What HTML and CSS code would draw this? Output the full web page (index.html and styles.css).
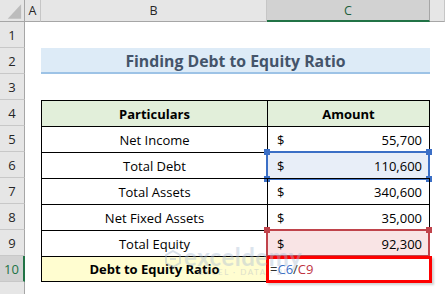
FILE: index.html
```html
<!DOCTYPE html>
<html>
<head>
<meta charset="utf-8">
<link rel="stylesheet" href="styles.css">
</head>
<body>
<div class="sheet">
  <div class="ch corner"><svg width="25" height="22" viewBox="0 0 25 22"><polygon points="22,4 22,19 8,19" fill="#bcbcbc"/></svg></div>
  <div class="ch">A</div>
  <div class="ch">B</div>
  <div class="ch ch-active">C</div>
  <div class="ch"></div>

  <div class="rh">1</div><div class="c"></div><div class="c"></div><div class="c"></div><div class="c"></div>

  <div class="rh">2</div><div class="c"></div><div class="title">Finding Debt to Equity Ratio</div><div class="c"></div>

  <div class="rh">3</div><div class="c"></div><div class="c"></div><div class="c"></div><div class="c"></div>

  <div class="rh">4</div><div class="c"></div>
  <div class="t tb head">Particulars</div><div class="t tc head">Amount</div><div class="c"></div>

  <div class="rh">5</div><div class="c"></div>
  <div class="t tb">Net Income</div><div class="t tc amt"><span>$</span><span>55,700</span></div><div class="c"></div>

  <div class="rh">6</div><div class="c"></div>
  <div class="t tb">Total Debt</div>
  <div class="t tc amt sel-b"><span>$</span><span>110,600</span>
    <div class="box-b"><i class="h tl"></i><i class="h tr"></i><i class="h bl"></i><i class="h br"></i></div>
  </div><div class="c"></div>

  <div class="rh">7</div><div class="c"></div>
  <div class="t tb">Total Assets</div><div class="t tc amt"><span>$</span><span>340,600</span></div><div class="c"></div>

  <div class="rh">8</div><div class="c"></div>
  <div class="t tb">Net Fixed Assets</div><div class="t tc amt"><span>$</span><span>35,000</span></div><div class="c"></div>

  <div class="rh">9</div><div class="c"></div>
  <div class="t tb">Total Equity</div>
  <div class="t tc amt sel-r"><span>$</span><span>92,300</span>
    <div class="box-r"><i class="h tl"></i><i class="h tr"></i></div>
  </div><div class="c"></div>

  <div class="rh rh-active">10</div><div class="c"></div>
  <div class="t tb last result">Debt to Equity Ratio</div>
  <div class="t tc last formula"><span class="eq">=</span><span class="ref-b">C6</span><span class="eq">/</span><span class="ref-r">C9</span>
    <div class="box-edit"></div>
  </div><div class="c"></div>

  <div class="rh"></div><div class="c"></div><div class="c"></div><div class="c"></div><div class="c"></div>

  <div class="wm">
    <svg class="wm-logo" width="16" height="18" viewBox="0 0 16 18"><path d="M8 1 L15 5 L15 13 L8 17 L1 13 L1 5 Z" fill="none" stroke="#9fb3cc" stroke-width="2"/><path d="M5 9 L11 9" stroke="#9fb3cc" stroke-width="2"/></svg>
    <div class="wm-text">
      <div class="wm-big">exceldemy</div>
      <div class="wm-small">EXCEL · DATA · BI</div>
    </div>
  </div>
</div>
</body>
</html>
```

FILE: styles.css
```css
html, body {
  margin: 0;
  padding: 0;
  background: #ffffff;
  overflow: hidden;
}

.sheet {
  position: relative;
  width: 445px;
  height: 294px;
  display: grid;
  grid-template-columns: 25px 16px 226px 163px 15px;
  grid-template-rows: 22px repeat(11, 26px);
  font-family: "Open Sans", "Liberation Sans", sans-serif;
  font-size: 13px;
  color: #000;
}

.ch {
  background: #e6e6e6;
  border-bottom: 1px solid #a6a6a6;
  border-right: 1px solid #c6c6c6;
  box-sizing: border-box;
  display: flex;
  align-items: center;
  justify-content: center;
  font-size: 12.5px;
  color: #262626;
}

.corner {
  border-right: 1px solid #a6a6a6;
}

.ch-active {
  background: #d2d2d2;
  border-bottom: 2px solid #217346;
  color: #1d5f3c;
  border-right: 1px solid #a6a6a6;
}

.rh {
  background: #e6e6e6;
  border-right: 1px solid #a6a6a6;
  border-bottom: 1px solid #c8c8c8;
  box-sizing: border-box;
  display: flex;
  align-items: center;
  justify-content: center;
  font-size: 13px;
  color: #262626;
}

.rh-active {
  background: #d2d2d2;
  border-right: 2px solid #217346;
  color: #217346;
}

.c {
  background: #fff;
}

.title {
  grid-column: 3 / 5;
  background: #ddebf7;
  border-bottom: 2px solid #9dc3e6;
  box-sizing: border-box;
  display: flex;
  align-items: center;
  justify-content: center;
  font-weight: 700;
  font-size: 15.8px;
  color: #44546a;
  padding-top: 1px;
}

.t {
  box-sizing: border-box;
  border-top: 1px solid #000;
  border-left: 1px solid #000;
  display: flex;
  align-items: center;
  position: relative;
}

.tb {
  justify-content: center;
}

.tc {
  border-right: 1px solid #000;
}

.last {
  border-bottom: 1px solid #000;
}

.head {
  background: #e2efda;
  font-weight: 700;
  justify-content: center;
}

.amt {
  justify-content: space-between;
  padding: 0 7px 0 9px;
}

.sel-b {
  background: #e8eef8;
}

.sel-r {
  background: #f9e4e5;
}

.result {
  background: #fffdd0;
  font-weight: 700;
}

.formula {
  padding-left: 2px;
}

.eq {
  color: #333;
}

.ref-b {
  color: #3b6fc6;
}

.ref-r {
  color: #c0343f;
}

.box-b {
  position: absolute;
  left: -2px;
  top: -2px;
  right: -1px;
  bottom: -2px;
  border: 2px solid #3b6fc6;
}

.box-r {
  position: absolute;
  left: -2px;
  top: -2px;
  right: -1px;
  bottom: -1px;
  border: 2px solid #c0434b;
}

.box-b .h { background: #3b6fc6; }
.box-r .h { background: #c0434b; }

.h {
  position: absolute;
  width: 6px;
  height: 6px;
}

.h.tl { left: -4px; top: -4px; }
.h.tr { right: -4px; top: -4px; }
.h.bl { left: -4px; bottom: -4px; }
.h.br { right: -4px; bottom: -4px; }

.box-edit {
  position: absolute;
  left: -2px;
  top: -1px;
  right: -3px;
  bottom: -2px;
  border: 3px solid #ff0000;
  box-shadow: 2px 2px 2px rgba(0, 0, 0, 0.18);
}

.wm {
  position: absolute;
  left: 165px;
  top: 246px;
  display: flex;
  align-items: flex-start;
  gap: 3px;
  opacity: 0.4;
  pointer-events: none;
}

.wm-logo {
  margin-top: 4px;
}

.wm-text {
  display: flex;
  flex-direction: column;
  align-items: center;
}

.wm-big {
  font-family: "Lato", sans-serif;
  font-weight: 700;
  font-size: 24px;
  line-height: 22px;
  color: #a9bcd4;
  letter-spacing: 0.5px;
}

.wm-small {
  font-family: "Lato", sans-serif;
  font-size: 8px;
  line-height: 9px;
  color: #a9b4c2;
  letter-spacing: 1.5px;
}
```
